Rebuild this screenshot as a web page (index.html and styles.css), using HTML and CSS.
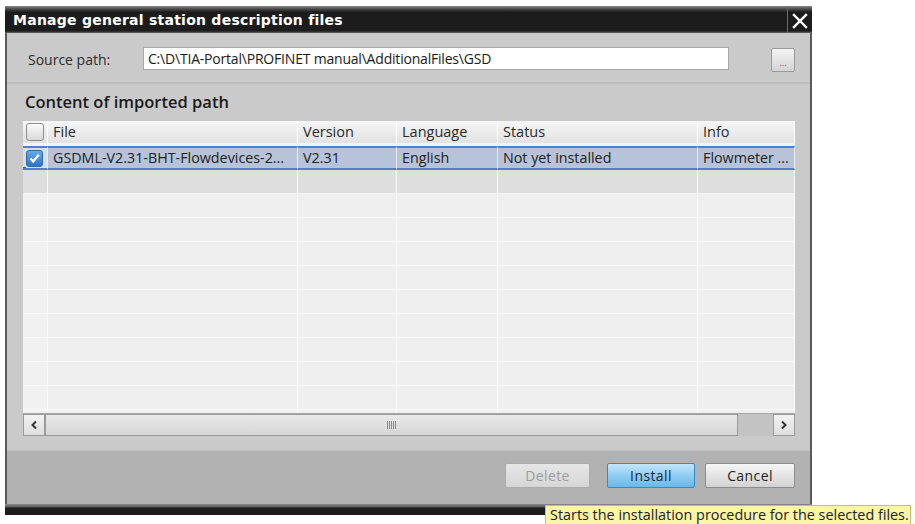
FILE: index.html
```html
<!DOCTYPE html>
<html lang="en">
<head>
<meta charset="utf-8">
<title>Manage general station description files</title>
<link rel="stylesheet" href="styles.css">
</head>
<body>
<div class="dialog">
  <div class="titlebar">
    <span class="title">Manage general station description files</span>
    <button class="close" type="button" aria-label="Close">
      <svg width="16" height="16" viewBox="0 0 16 16"><path d="M2 2 L14 14 M14 2 L2 14" stroke="#fff" stroke-width="2.4" stroke-linecap="square"/></svg>
    </button>
  </div>

  <div class="body">
    <div class="source-row">
      <span class="label">Source path:</span>
      <div class="path-input">C:\D\TIA-Portal\PROFINET manual\AdditionalFiles\GSD</div>
      <button class="browse" type="button">...</button>
    </div>

    <div class="section">
      <h2 class="section-title">Content of imported path</h2>

      <div class="grid">
        <div class="row head">
          <div class="cell chk"><span class="box"></span></div>
          <div class="cell">File</div>
          <div class="cell">Version</div>
          <div class="cell">Language</div>
          <div class="cell">Status</div>
          <div class="cell">Info</div>
        </div>

        <div class="row selected">
          <div class="cell chk"><span class="box checked"><svg width="13" height="13" viewBox="0 0 13 13"><path d="M2.5 6.5 L5.2 9.5 L10.8 2.8" fill="none" stroke="#fff" stroke-width="2.2"/></svg></span><span class="focus-dot"></span></div>
          <div class="cell">GSDML-V2.31-BHT-Flowdevices-2...</div>
          <div class="cell">V2.31</div>
          <div class="cell">English</div>
          <div class="cell">Not yet installed</div>
          <div class="cell">Flowmeter ...</div>
        </div>

        <div class="row empty first"><div class="cell chk"></div><div class="cell"></div><div class="cell"></div><div class="cell"></div><div class="cell"></div><div class="cell"></div></div>
        <div class="row empty"><div class="cell chk"></div><div class="cell"></div><div class="cell"></div><div class="cell"></div><div class="cell"></div><div class="cell"></div></div>
        <div class="row empty"><div class="cell chk"></div><div class="cell"></div><div class="cell"></div><div class="cell"></div><div class="cell"></div><div class="cell"></div></div>
        <div class="row empty"><div class="cell chk"></div><div class="cell"></div><div class="cell"></div><div class="cell"></div><div class="cell"></div><div class="cell"></div></div>
        <div class="row empty"><div class="cell chk"></div><div class="cell"></div><div class="cell"></div><div class="cell"></div><div class="cell"></div><div class="cell"></div></div>
        <div class="row empty"><div class="cell chk"></div><div class="cell"></div><div class="cell"></div><div class="cell"></div><div class="cell"></div><div class="cell"></div></div>
        <div class="row empty"><div class="cell chk"></div><div class="cell"></div><div class="cell"></div><div class="cell"></div><div class="cell"></div><div class="cell"></div></div>
        <div class="row empty"><div class="cell chk"></div><div class="cell"></div><div class="cell"></div><div class="cell"></div><div class="cell"></div><div class="cell"></div></div>
        <div class="row empty"><div class="cell chk"></div><div class="cell"></div><div class="cell"></div><div class="cell"></div><div class="cell"></div><div class="cell"></div></div>
        <div class="row empty"><div class="cell chk"></div><div class="cell"></div><div class="cell"></div><div class="cell"></div><div class="cell"></div><div class="cell"></div></div>
        <div class="row empty last"><div class="cell chk"></div><div class="cell"></div><div class="cell"></div><div class="cell"></div><div class="cell"></div><div class="cell"></div></div>
      </div>

      <div class="hscroll">
        <button class="arrow" type="button" aria-label="Scroll left">
          <svg width="8" height="10" viewBox="0 0 8 10"><path d="M6 1.5 L2.5 5 L6 8.5" fill="none" stroke="#333" stroke-width="2"/></svg>
        </button>
        <div class="thumb"><span class="grip"></span></div>
        <div class="track"></div>
        <button class="arrow" type="button" aria-label="Scroll right">
          <svg width="8" height="10" viewBox="0 0 8 10"><path d="M2 1.5 L5.5 5 L2 8.5" fill="none" stroke="#333" stroke-width="2"/></svg>
        </button>
      </div>
    </div>
  </div>

  <div class="footer">
    <button class="btn disabled" type="button">Delete</button>
    <button class="btn primary" type="button">Install</button>
    <button class="btn" type="button">Cancel</button>
  </div>
  <div class="bottom-edge"></div>

  <div class="tooltip">Starts the installation procedure for the selected files.</div>
</div>
</body>
</html>
```
FILE: styles.css
```css
* { box-sizing: border-box; }

html, body {
  margin: 0;
  padding: 0;
  background: #ffffff;
  width: 915px;
  height: 524px;
  overflow: hidden;
}

body {
  font-family: "Open Sans", "Noto Sans", sans-serif;
  font-size: 14px;
  color: #1e1e1e;
}

button {
  font-family: inherit;
  margin: 0;
}

.dialog {
  position: relative;
  width: 807px;
  margin: 6px 0 0 5px;
  border-left: 2px solid #5a5a5a;
  border-right: 2px solid #5a5a5a;
}

/* Title bar */
.titlebar {
  height: 27px;
  display: flex;
  align-items: center;
  justify-content: space-between;
  background: linear-gradient(#8a8a8a 0, #4a4a4a 3px, #1c1c1c 6px, #1c1c1c 25px, #6a6a6a 27px);
  margin-left: -2px;
  margin-right: -2px;
}

.title {
  padding-left: 8px;
  padding-top: 1px;
  color: #ffffff;
  font-family: "DejaVu Sans", sans-serif;
  font-weight: bold;
  font-size: 14px;
  letter-spacing: 0.25px;
}

.close {
  width: 25px;
  height: 27px;
  border: 0;
  border-left: 1px solid #6a6a6a;
  background: transparent;
  display: flex;
  align-items: center;
  justify-content: center;
  padding: 2px 0 0;
}

/* Main area */
.body {
  background: #cacaca;
  padding: 0 15px 14px 16px;
}

.source-row {
  display: flex;
  align-items: center;
  height: 51px;
  margin: 0 -15px 0 -16px;
  padding-right: 15px;
  padding-left: 21px;
  border-bottom: 2px solid #bdbdbd;
}

.label {
  width: 115px;
  font-size: 14px;
  color: #2a2a2a;
  padding-top: 4px;
}

.path-input {
  width: 586px;
  height: 23px;
  margin-top: 2px;
  background: #ffffff;
  border: 1px solid #a8a8a8;
  padding: 1px 4px 0;
  font-size: 14px;
  letter-spacing: -0.2px;
  color: #1a1a1a;
  line-height: 19px;
}

.browse {
  width: 24px;
  height: 24px;
  margin-left: 42px;
  margin-top: 4px;
  border: 1px solid #9a9a9a;
  border-radius: 2px;
  background: linear-gradient(#f4f4f4, #d4d4d4);
  font-size: 9px;
  line-height: 1;
  color: #555;
  padding: 6px 0 0;
}

.section-title {
  margin: 0;
  padding: 8px 0 9px 2px;
  font-size: 16.5px;
  font-weight: 600;
  color: #1a1a1a;
  line-height: 20px;
}

/* Table */
.grid {
  display: flex;
  flex-direction: column;
  height: 292px;
  overflow: hidden;
  background: #efefef;
}

.row {
  display: grid;
  grid-template-columns: 25px 250px 99px 101px 200px 97px;
  flex: none;
}

.cell {
  border-right: 1px solid #f8f8f8;
  padding-left: 5px;
  white-space: nowrap;
  overflow: hidden;
}

.head {
  height: 22px;
  background: linear-gradient(#f6f6f6, #e2e2e2);
  align-items: center;
}

.head .cell {
  border-right: 1px solid #ffffff;
  height: 22px;
  line-height: 22px;
  font-size: 14.5px;
  color: #2a2a2a;
}

.chk {
  padding-left: 3px;
  position: relative;
  display: flex;
  align-items: center;
}

.box {
  width: 18px;
  height: 18px;
  border: 1px solid #8e8e8e;
  border-radius: 3px;
  background: linear-gradient(#fbfbfb, #d8d8d8);
  display: flex;
  align-items: center;
  justify-content: center;
}

.box.checked {
  width: 17px;
  height: 17px;
  border-color: #2f6aa8;
  background: linear-gradient(#6aa8e6, #2a77cc);
}

.selected {
  height: 27px;
  padding-top: 3px;
  background: #f3f3f3;
}

.selected .cell {
  height: 24px;
  line-height: 20px;
  background: #b7c3d8;
  border-top: 2px solid #4f7fd4;
  border-bottom: 2px solid #4f7fd4;
  border-right: 1px solid #e6ebf3;
  font-size: 14.3px;
  color: #222;
}

.selected .chk {
  background: #d9dde4;
}

.focus-dot {
  position: absolute;
  left: 0;
  bottom: -2px;
  width: 3px;
  height: 3px;
  background: #2e5fd0;
}

.empty {
  height: 24px;
}

.empty .cell {
  border-right: 1px solid #fafafa;
  border-bottom: 1px solid #fafafa;
  background: #efefef;
}

.empty.first .cell {
  background: #dedede;
  border-bottom: 1px solid #f6f6f6;
}

.empty .chk {
  background: #f1f1f1;
}

/* Horizontal scrollbar */
.hscroll {
  display: flex;
  height: 23px;
  border-top: 1px solid #a9a9a9;
  background: #c3c3c3;
}

.arrow {
  width: 22px;
  height: 22px;
  border: 1px solid #9a9a9a;
  background: linear-gradient(#f2f2f2, #dedede);
  display: flex;
  align-items: center;
  justify-content: center;
  padding: 0;
}

.thumb {
  width: 693px;
  height: 22px;
  border: 1px solid #9a9a9a;
  background: linear-gradient(#e9e9e9, #d6d6d6);
  display: flex;
  align-items: center;
  justify-content: center;
}

.grip {
  width: 10px;
  height: 8px;
  background: repeating-linear-gradient(90deg, #8a8a8a 0 1px, transparent 1px 2px);
}

.track {
  flex: 1;
}

/* Footer buttons */
.footer {
  height: 54px;
  background: #b2b2b2;
  border-top: 1px solid #c0c0c0;
  display: flex;
  justify-content: flex-end;
  align-items: flex-start;
  padding: 12px 15px 0 0;
}

.btn {
  width: 90px;
  height: 25px;
  margin-left: 10px;
  border: 1px solid #8c8c8c;
  border-radius: 2px;
  background: linear-gradient(#f6f6f6, #d2d2d2);
  font-size: 14px;
  color: #1e1e1e;
  padding: 0 0 1px;
  letter-spacing: 0.4px;
}

.btn.disabled {
  width: 85px;
  border-color: #acacac;
  background: linear-gradient(#e6e6e6, #d6d6d6);
  color: #9c9c9c;
}

.btn.primary {
  width: 88px;
  margin-left: 17px;
  border-color: #3a87c8;
  background: linear-gradient(#c4e6fa, #8fcdf2 50%, #6ab8e8);
  color: #1a2a3a;
}

.bottom-edge {
  height: 11px;
  margin: 0 -2px;
  background: linear-gradient(#8a8a8a 0, #5a5a5a 3px, #1c1c1c 4px, #1c1c1c 11px);
}

/* Tooltip */
.tooltip {
  position: absolute;
  left: 538px;
  top: 499px;
  height: 19px;
  padding: 0 1px 0 4px;
  background: #fbf5a8;
  border: 1px solid #c8c070;
  border-bottom: 0;
  font-size: 14.4px;
  line-height: 18px;
  color: #222;
  white-space: nowrap;
}
```
